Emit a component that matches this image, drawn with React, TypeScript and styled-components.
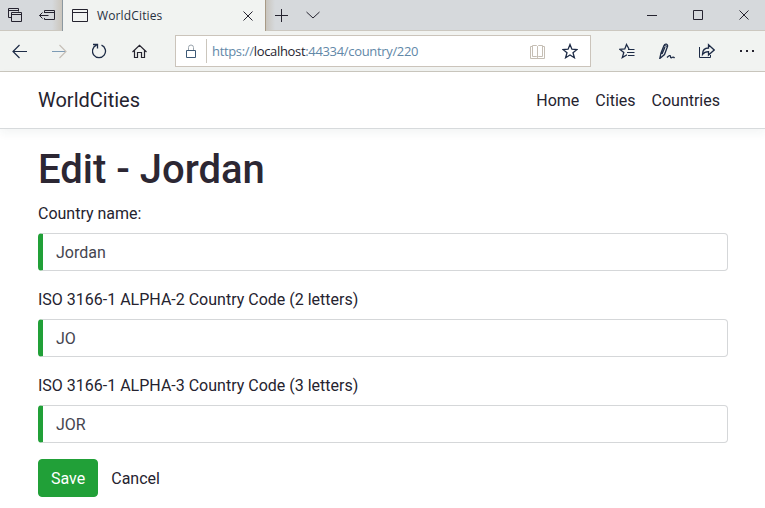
import React from "react";
import styled, { createGlobalStyle } from "styled-components";

const GlobalStyle = createGlobalStyle`
  *, *::before, *::after { box-sizing: border-box; }
  body {
    margin: 0;
    background: #fff;
    color: #25232f;
    font: 400 16px/24px Roboto, "Liberation Sans", sans-serif;
    overflow: hidden;
  }
`;

const Window = styled.div`
  height: 508px;
  overflow: hidden;
`;

const TabStrip = styled.div`
  display: flex;
  height: 31px;
  background: #d6d9dc;
  border-bottom: 1px solid #ccc8c0;
`;

const StripActions = styled.div`
  display: flex;
  align-items: center;
  gap: 15px;
  width: 62px;
  padding-left: 8px;
  background: linear-gradient(90deg, transparent 52px, #cbc6bd 62px);
`;

const Tab = styled.div`
  display: flex;
  align-items: center;
  width: 204px;
  height: 31px;
  padding: 0 12px 0 9px;
  background: #f1f3f1;
  border-left: 1px solid #8c98a0;
  border-right: 1px solid #a89a86;
`;

const TabTitle = styled.span`
  flex: 1;
  margin-left: 9px;
  font: 12px/16px "Open Sans", "Noto Sans", sans-serif;
  letter-spacing: 0.14px;
  color: #27303f;
`;

const NewTabActions = styled.div`
  display: flex;
  flex: 1;
  align-items: center;
  gap: 17px;
  padding-left: 8px;
  background: linear-gradient(90deg, #c9c5be, transparent 9px);
`;

const WindowControls = styled.div`
  display: flex;
  margin-right: -2px;
`;

const Slot = styled.div<{ $w: number }>`
  display: flex;
  flex: none;
  align-items: center;
  justify-content: center;
  width: ${(p) => p.$w}px;
`;

const Glyph = styled.svg<{ $color?: string }>`
  display: block;
  flex: none;
  fill: none;
  stroke: ${(p) => p.$color ?? "#25232f"};
  stroke-width: 1;
`;

const Toolbar = styled.div`
  display: flex;
  height: 41px;
  background: #f1f3f1;
  border-bottom: 1px solid #cac7be;
`;

const AddressBar = styled.div`
  display: flex;
  flex: none;
  align-items: center;
  width: 416px;
  height: 32px;
  margin: 4px 16px 0 15px;
  padding: 0 12px 0 7px;
  background: #fff;
  border: 1px solid #cbc4bb;
`;

const Divider = styled.span`
  width: 1px;
  height: 24px;
  margin: 0 5px 0 7px;
  background: #cbc6bd;
`;

const Url = styled.span`
  flex: 1;
  font: 13px/18px "Open Sans", "Noto Sans", sans-serif;
  letter-spacing: -0.33px;
  color: #6288a8;
  b { font-weight: 400; color: #25232f; }
`;

const BookSlot = styled.span`
  margin-right: 16px;
`;

const Navbar = styled.nav`
  display: flex;
  align-items: center;
  justify-content: space-between;
  height: 57px;
  padding: 0 37px 0 38px;
  border-bottom: 1px solid #d7dadc;
  box-shadow: 0 4px 9px rgba(40, 60, 60, 0.06);
`;

const Brand = styled.a`
  font-size: 20px;
  line-height: 30px;
`;

const NavLinks = styled.div`
  display: flex;
  padding-top: 2px;
`;

const NavLink = styled.a`
  padding: 0 8px;
`;

const Page = styled.main`
  padding: 17px 37px 0 38px;
`;

const Heading = styled.h1`
  margin: 0 0 8px;
  font-size: 40px;
  line-height: 48px;
  font-weight: 500;
  color: #2c2733;
`;

const Field = styled.label`
  display: block;
  margin-bottom: 17px;
  &:last-of-type { margin-bottom: 16px; }
`;

const FieldName = styled.span`
  display: block;
  margin-bottom: 7px;
`;

const Input = styled.input`
  display: block;
  width: 100%;
  height: 38px;
  padding: 6px 12px 6px 13px;
  border: 1px solid #d5d7d9;
  border-left: 5px solid #21a038;
  border-radius: 4px;
  background: #fff;
  font: inherit;
  color: #454550;
  outline: none;
`;

const Actions = styled.div`
  display: flex;
`;

const Button = styled.button<{ $primary?: boolean }>`
  height: 38px;
  padding: 7px 12px 5px;
  border: 1px solid ${(p) => (p.$primary ? "#21a038" : "transparent")};
  border-radius: 4px;
  background: ${(p) => (p.$primary ? "#21a038" : "transparent")};
  color: ${(p) => (p.$primary ? "#fff" : "#25232f")};
  font: inherit;
`;

const fields = [
  { name: "Country name:", value: "Jordan" },
  { name: "ISO 3166-1 ALPHA-2 Country Code (2 letters)", value: "JO" },
  { name: "ISO 3166-1 ALPHA-3 Country Code (3 letters)", value: "JOR" },
];

interface IconProps {
  w?: number;
  h?: number;
  color?: string;
  children: React.ReactNode;
}

const Icon = ({ w = 16, h = 16, color, children }: IconProps) => (
  <Glyph width={w} height={h} viewBox={`0 0 ${w} ${h}`} $color={color}>
    {children}
  </Glyph>
);

const BrowserTabs = () => (
  <TabStrip>
    <StripActions>
      <Icon>
        <path d="M3.500 10.500H.5V1.500h10v3M.5 3.500h10M3.500 5.500h10v9h-10zM3.500 7.500h10" />
      </Icon>
      <Icon>
        <path d="M5.500 6V3.500h10v9h-10V11M5.500 5.500h10M.5 8.500h9M3.500 5.500l-3 3 3 3" />
      </Icon>
    </StripActions>
    <Tab>
      <Icon>
        <path d="M.5 1.500h15v12H.5zM.5 4.500h15" />
      </Icon>
      <TabTitle>WorldCities</TabTitle>
      <Icon w={10} h={10}>
        <path d="M.5.5l9 9M9.500.5l-9 9" />
      </Icon>
    </Tab>
    <NewTabActions>
      <Icon w={15} h={14}>
        <path d="M1 7.500h13M7.500 1v13" />
      </Icon>
      <Icon w={14} h={8}>
        <path d="M.5 1l6.500 6 6.500-6" />
      </Icon>
    </NewTabActions>
    <WindowControls>
      <Slot $w={46}>
        <Icon w={10} h={10}>
          <path d="M0 5.500h10" />
        </Icon>
      </Slot>
      <Slot $w={46}>
        <Icon w={10} h={10}>
          <path d="M.5.5h9v9h-9z" />
        </Icon>
      </Slot>
      <Slot $w={46}>
        <Icon w={10} h={10}>
          <path d="M.5.5l9 9M9.500.5l-9 9" />
        </Icon>
      </Slot>
    </WindowControls>
  </TabStrip>
);

const BrowserToolbar = () => (
  <Toolbar>
    <Slot $w={40}>
      <Icon color="#1d2b46">
        <path d="M15 8.500H1M7.500 2L1 8.500 7.500 15" strokeWidth="1.200" />
      </Icon>
    </Slot>
    <Slot $w={40}>
      <Icon color="#c6c0b8">
        <path d="M0 8.500h14" stroke="#7d9bb5" />
        <path d="M7.500 2L14 8.500 7.500 15" strokeWidth="1.200" />
      </Icon>
    </Slot>
    <Slot $w={40}>
      <Icon color="#1d2b46">
        <path d="M9.500 2.200A6.500 6.500 0 1 1 4.500 2.200M1 1.500h4.500v4" strokeWidth="1.300" />
      </Icon>
    </Slot>
    <Slot $w={40}>
      <Icon>
        <path d="M.5 9L7.500 2.300 14.500 9M2.500 7.500v7h3v-5h4v5h3v-7" strokeWidth="1.200" />
      </Icon>
    </Slot>
    <AddressBar>
      <Icon color="#3c5875">
        <path d="M3.500 7.500h9v7h-9z" />
        <path d="M5.500 7V4.500a2.500 2.500 0 0 1 5 0V7" stroke="#9aa4ad" />
      </Icon>
      <Divider />
      <Url>
        https://<b>localhost</b>:44334/country/220
      </Url>
      <BookSlot>
        <Icon color="#c5beb4">
          <path d="M2.500 3.500H.5v12h14v-12h-2M2.500 2.500h4l1 1 1-1h4v11h-4l-1 1-1-1h-4zM7.500 3.500v11" />
        </Icon>
      </BookSlot>
      <Icon color="#1d2b46">
        <path d="M8 1.500l1.900 4.700 5.100.3-4 3.200 1.400 5L8 11.900l-4.400 2.800 1.400-5-4-3.200 5.100-.3z" strokeWidth="1.300" />
      </Icon>
    </AddressBar>
    <Slot $w={40}>
      <Icon color="#1d2b46">
        <path d="M10 6L7.500 1.500 5.800 6 .8 6.300l4 3.200-1.500 5L8 11.800" strokeWidth="1.300" />
        <path d="M9 6.500h6.500M8 9.500h7.500M9 12.500h6.500" />
      </Icon>
    </Slot>
    <Slot $w={40}>
      <Icon color="#1d2b46">
        <path d="M.8 15.500L2 10 5 2.500C6 .3 9.200 1 8.500 3.500L5.500 11.500.8 15.500zM6 4L3 11M5.500 2.500l3 1M8 14.500c2-2 3.500-2.500 3.500-1 0 1.800 1 1.500 2 .8.8-.5 1.500 0 2 .7" strokeWidth="1.300" />
      </Icon>
    </Slot>
    <Slot $w={40}>
      <Icon color="#1d2b46">
        <path d="M.5 4v10.500h11V12" />
        <path d="M3.500 11.500c0-4.500 2-6.500 6-6.500V1.800L15.200 7 9.500 12V8.700c-3 0-4.500.6-6 2.800z" strokeWidth="1.300" />
      </Icon>
    </Slot>
    <Slot $w={40}>
      <Icon>
        <path d="M1 8h2M7 8h2M13 8h2" strokeWidth="2" />
      </Icon>
    </Slot>
  </Toolbar>
);

export default function App() {
  return (
    <Window>
      <GlobalStyle />
      <BrowserTabs />
      <BrowserToolbar />
      <Navbar>
        <Brand>WorldCities</Brand>
        <NavLinks>
          <NavLink>Home</NavLink>
          <NavLink>Cities</NavLink>
          <NavLink>Countries</NavLink>
        </NavLinks>
      </Navbar>
      <Page>
        <Heading>Edit - Jordan</Heading>
        {fields.map((f) => (
          <Field key={f.name}>
            <FieldName>{f.name}</FieldName>
            <Input defaultValue={f.value} />
          </Field>
        ))}
        <Actions>
          <Button $primary>Save</Button>
          <Button>Cancel</Button>
        </Actions>
      </Page>
    </Window>
  );
}
